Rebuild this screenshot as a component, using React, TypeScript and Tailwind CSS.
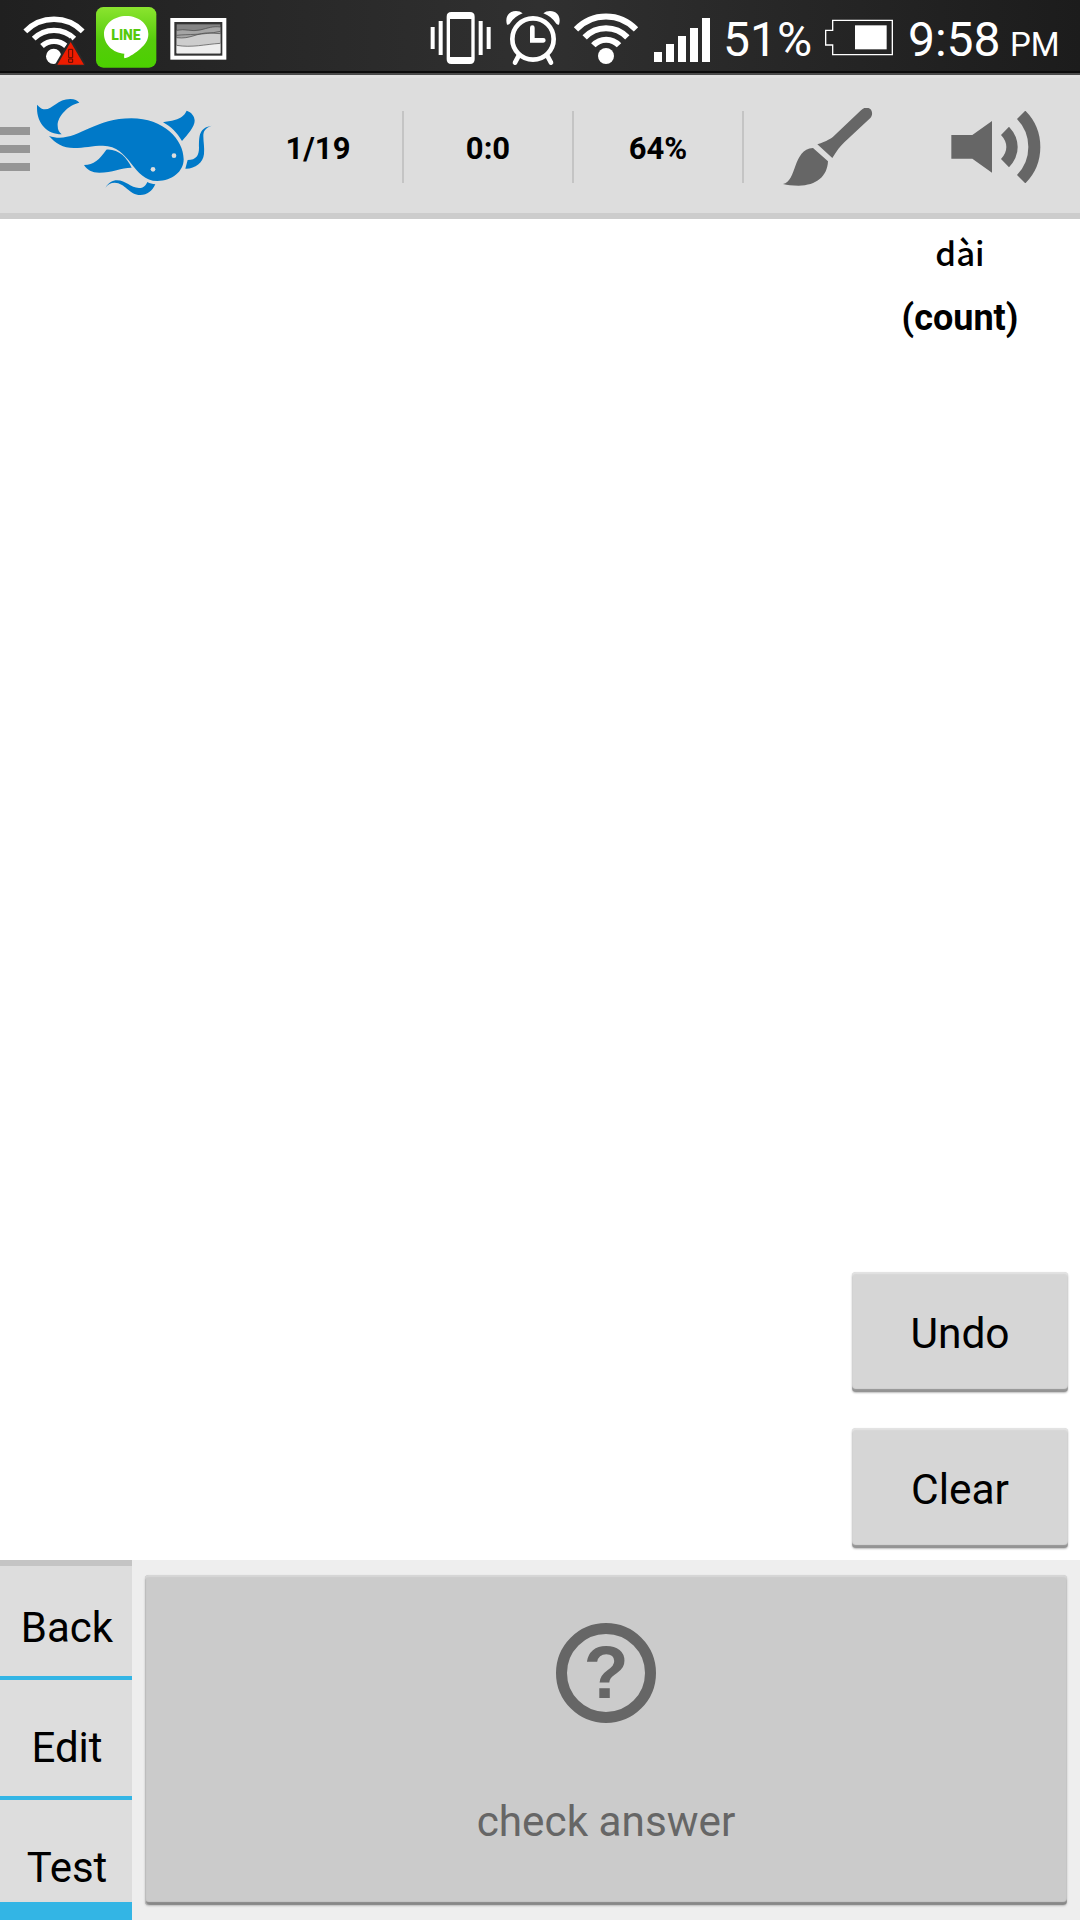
import type { ReactNode } from "react";

function StatusBar() {
  return (
    <div className="flex h-[75px] border-b-2 border-[#4a4a4a] bg-linear-to-r from-[#202020] via-[#303030] to-[#1c1c1c] text-white">
      <div className="flex h-full w-full border-b-2 border-[#0c0c0c]">
        <svg className="ml-[23px] h-[72px] w-[62px] shrink-0" viewBox="69 0 186 216">
          <g fill="none" stroke="#fff" strokeWidth="16">
            <path d="M76 94a120 120 0 0 1 172 0" />
            <path d="M101 116a87 87 0 0 1 122 0" />
            <path d="M126 138a53 53 0 0 1 72 0" />
          </g>
          <circle cx="161" cy="169" r="23" fill="#fff" />
          <path d="M212 113 260 197H163Z" fill="#292929" />
          <path d="M212 126 252 194H172Z" fill="#ee1c00" />
          <path d="M206 148h12v25h-12zM206 177h12v10h-12z" fill="#ee1c00" stroke="#5d0d00" strokeWidth="3" />
        </svg>

        <svg className="ml-[11px] h-[72px] w-[61px] shrink-0" viewBox="288 0 183 216">
          <defs>
            <linearGradient id="line" x1="0" x2="0" y1="0" y2="1">
              <stop offset="0" stopColor="#8be42f" />
              <stop offset="0.55" stopColor="#56cc0c" />
              <stop offset="1" stopColor="#4bd000" />
            </linearGradient>
          </defs>
          <rect x="288" y="21" width="181" height="182" rx="22" fill="url(#line)" />
          <path
            d="M379 48c37 0 66 24 66 54 0 18-9 31-24 44-13 12-32 24-44 28-6 2-5-3-4-13-34-2-61-28-61-59 0-30 30-54 67-54Z"
            fill="#fff"
          />
          <text
            x="378"
            y="120"
            fill="#55c90c"
            fontFamily="Roboto, sans-serif"
            fontSize="45"
            fontWeight="900"
            textAnchor="middle"
            textLength="88"
            lengthAdjust="spacingAndGlyphs"
          >
            LINE
          </text>
        </svg>

        <svg className="ml-[13px] h-[72px] w-[57px] shrink-0" viewBox="509 0 171 216">
          <rect x="510" y="54" width="168" height="125" fill="#fff" />
          <rect x="522" y="66" width="144" height="101" fill="#333" />
          <rect x="529" y="73" width="131" height="87" fill="#858585" />
          <path d="M529 91c25-6 45 5 70-1s38-12 61-9v79H529Z" fill="#a5a5a5" />
          <path d="M529 113c40 6 65-17 100-14l31 2v59H529Z" fill="#cdcdcd" />
          <path d="M529 136c45 8 85-3 131-6v30H529Z" fill="#eee" />
          <path
            d="M529 91c25-6 45 5 70-1s38-12 61-9M529 106c35-4 75 0 131-12M529 113c40 6 65-17 100-14l31 2M529 136c45 8 85-3 131-6"
            fill="none"
            stroke="#444"
            strokeWidth="2"
          />
        </svg>

        <svg className="ml-auto h-[72px] w-[62px] shrink-0" viewBox="31 0 186 216" fill="#fff">
          <path d="M33 81h12v66H33zM57 63h12v102H57zM177 63h12v102h-12zM201 81h12v66h-12z" />
          <path
            fillRule="evenodd"
            d="M95 36h56q14 0 14 14v128q0 14-14 14H95q-14 0-14-14V50q0-14 14-14ZM91 57v114h64V57Z"
          />
        </svg>

        <svg className="ml-[13px] h-[72px] w-[56px] shrink-0" viewBox="255 0 168 216">
          <g fill="none" stroke="#fff" strokeLinecap="round">
            <circle cx="339" cy="117" r="62" strokeWidth="14" />
            <path d="M337 83v38h33" strokeWidth="14" />
            <path d="M295 169 285 188M383 169l10 19" strokeWidth="14" />
          </g>
          <path
            d="M261 74c-7-23 5-41 27-41q12 0 20 7Q285 48 269 71q-4 4-8 3ZM417 74c7-23-5-41-27-41q-12 0-20 7 23 8 39 31 4 4 8 3Z"
            fill="#fff"
          />
        </svg>

        <svg className="ml-[11px] h-[72px] w-[68px] shrink-0" viewBox="456 0 204 216">
          <g fill="none" stroke="#fff" strokeWidth="18">
            <path d="M468 88a124 124 0 0 1 180 0" />
            <path d="M494 112a88 88 0 0 1 128 0" />
            <path d="M520 136a52 52 0 0 1 77 0" />
          </g>
          <circle cx="558" cy="168" r="24" fill="#fff" />
        </svg>

        <svg className="ml-[14px] h-[72px] w-[56px] shrink-0" viewBox="702 0 168 216" fill="#fff">
          <path d="M702 156h24v30h-24zM738 132h24v54h-24zM774 108h24v78h-24zM810 84h24v102h-24zM846 54h24v132h-24z" />
        </svg>

        <span className="ml-[13px] w-[101px] pt-[4px] text-[48px] leading-[72px]">51%</span>

        <svg className="ml-[1px] h-[72px] w-[68px] shrink-0" viewBox="375 0 204 216">
          <path d="M398 61h179v103H398v-29H377V91h21Z" fill="none" stroke="#fff" strokeWidth="4" />
          <path d="M465 76h95v72h-95z" fill="#fff" />
        </svg>

        <span className="ml-[15px] w-[102px] pt-[4px] text-[48px] leading-[72px]">9:58</span>
        <span className="w-[70px] pt-[9px] text-[33px] leading-[72px]">PM</span>
      </div>
    </div>
  );
}

function Catfish() {
  return (
    <svg className="ml-[5px] h-[100px] w-[180px] shrink-0" viewBox="105 81 540 300" fill="#0079c8">
      <path d="M111 104c6 6 13 14 24 14 23 0 38-31 76-31 13 0 22 5 27 11-31 6-66 40-65 69 0 13 5 20 12 26-43 0-74-32-74-79Z" />
      <path d="M147 198c78 26 125-53 247-53 96 0 157 63 157 123 0 36-34 65-79 65-74 0-81-106-163-106-33 0-56 7-87 7-33 0-56-14-75-36Z" />
      <path d="M489 157c19-6 57-3 71-35 14 4 24 17 24 30 0 18-21 41-38 61-15-25-33-43-57-56Z" />
      <path d="M637 167c-22 6-27 17-27 31 0 19 4 34 2 54-3 27-27 45-56 44l7-26c26 0 34-15 34-37 0-36 0-61 40-66Z" />
      <path d="M319 239c36-3 61 23 76 54-27-1-58 15-97 15-22 0-37-8-46-23 30-1 46-16 67-46Z" />
      <path d="M316 353c11-16 21-22 35-22 27 0 41 23 66 23 13 0 19-6 25-18 8 4 15 6 24 7-9 20-24 32-45 32-33 0-46-37-77-37-12 0-20 5-28 15Z" />
      <circle cx="522" cy="257" r="7" fill="#ddd" />
      <circle cx="459" cy="298" r="7" fill="#ddd" />
    </svg>
  );
}

function Stat({ children }: { children: ReactNode }) {
  return (
    <div className="flex h-[72px] w-[170px] shrink-0 items-center justify-center border-r-2 border-[#c4c4c4] pt-1 text-[31px] font-bold">
      {children}
    </div>
  );
}

function Toolbar() {
  return (
    <header className="flex h-36 items-center bg-[#ddd] shadow-[inset_0_3px_#e1e1e1,inset_0_-6px_#ccc]">
      <button className="flex w-[30px] shrink-0 flex-col gap-2.5 pt-1" aria-label="Menu">
        <span className="h-2 bg-[#969696]" />
        <span className="h-2 bg-[#969696]" />
        <span className="h-2 bg-[#969696]" />
      </button>
      <Catfish />
      <div className="ml-[19px] flex">
        <Stat>1/19</Stat>
        <Stat>0:0</Stat>
        <Stat>64%</Stat>
      </div>
      <button className="flex w-[168px] justify-center" aria-label="Brush">
        <svg className="h-[78px] w-[90px]" viewBox="128 114 270 234" fill="#666">
          <path d="M128 342c43-8 28-104 90-108l45 40c-2 45-35 73-88 73-20 0-34-1-47-5Z" />
          <path d="M231 223c29-9 42-17 52-27l79-75c9-10 20-10 28-4 7 8 7 18 0 27l-78 73c-11 10-24 27-36 47Z" />
        </svg>
      </button>
      <button className="ml-[39px]" aria-label="Sound">
        <svg className="h-[72px] w-[90px]" viewBox="632 123 270 216" fill="#666">
          <path d="M633 195h63l59-42v155l-59-42h-63Z" />
          <path d="M806 170q26 28 26 61t-26 61l-24-25q16-17 16-36t-16-36ZM855 122q45 45 45 109t-45 109l-25-25q34-35 34-84t-34-84Z" />
        </svg>
      </button>
    </header>
  );
}

function PadButton({ children }: { children: ReactNode }) {
  return (
    <button className="h-[120px] w-[216px] rounded-[4px] bg-[#d6d6d6] pt-[4px] text-[42.5px] shadow-[inset_0_2px_1px_#e3e3e3,inset_0_-3px_1px_#949494,0_1px_2px_#bbb]">
      {children}
    </button>
  );
}

export default function App() {
  return (
    <div className="flex h-[1920px] w-[1080px] flex-col overflow-hidden bg-white font-['Roboto',sans-serif] text-black">
      <StatusBar />
      <Toolbar />

      <main className="flex flex-1 flex-col items-end justify-between pr-3 pb-3">
        <div className="flex w-[216px] flex-col items-center text-[36px] font-bold">
          <span className="font-['Noto_Sans_CJK_SC',sans-serif] text-[33px] leading-[66px] font-medium">dài</span>
          <span className="leading-[66px]">(count)</span>
        </div>
        <div className="flex flex-col gap-9">
          <PadButton>Undo</PadButton>
          <PadButton>Clear</PadButton>
        </div>
      </main>

      <footer className="flex h-[360px] shrink-0 bg-[#eee]">
        <nav className="flex w-[132px] flex-col bg-[#ddd] text-[42px]">
          <button className="h-[120px] border-t-[6px] border-b-4 border-t-[#c4c4c4] border-b-[#33b5e5] pt-[12px] pl-[2px]">
            Back
          </button>
          <button className="h-[120px] border-b-4 border-[#33b5e5] pt-[18px] pl-[2px]">Edit</button>
          <button className="h-[120px] border-b-[18px] border-[#33b5e5] pt-[32px] pl-[2px]">Test</button>
        </nav>
        <button className="mt-[15px] ml-[13px] flex h-[330px] w-[922px] flex-col items-center rounded-[4px] bg-[#cbcbcb] text-[#666] shadow-[inset_0_2px_1px_#d6d6d6,inset_1px_0_1px_#bbb,inset_0_-3px_1px_#888,0_1px_2px_#bbb]">
          <span className="mt-[48px] flex size-[100px] items-center justify-center rounded-full border-[11px] border-[#666] font-['Liberation_Sans',sans-serif] text-[74px] leading-none font-bold">
            ?
          </span>
          <span className="mt-[74px] text-[42.3px] leading-[50px]">check answer</span>
        </button>
      </footer>
    </div>
  );
}
